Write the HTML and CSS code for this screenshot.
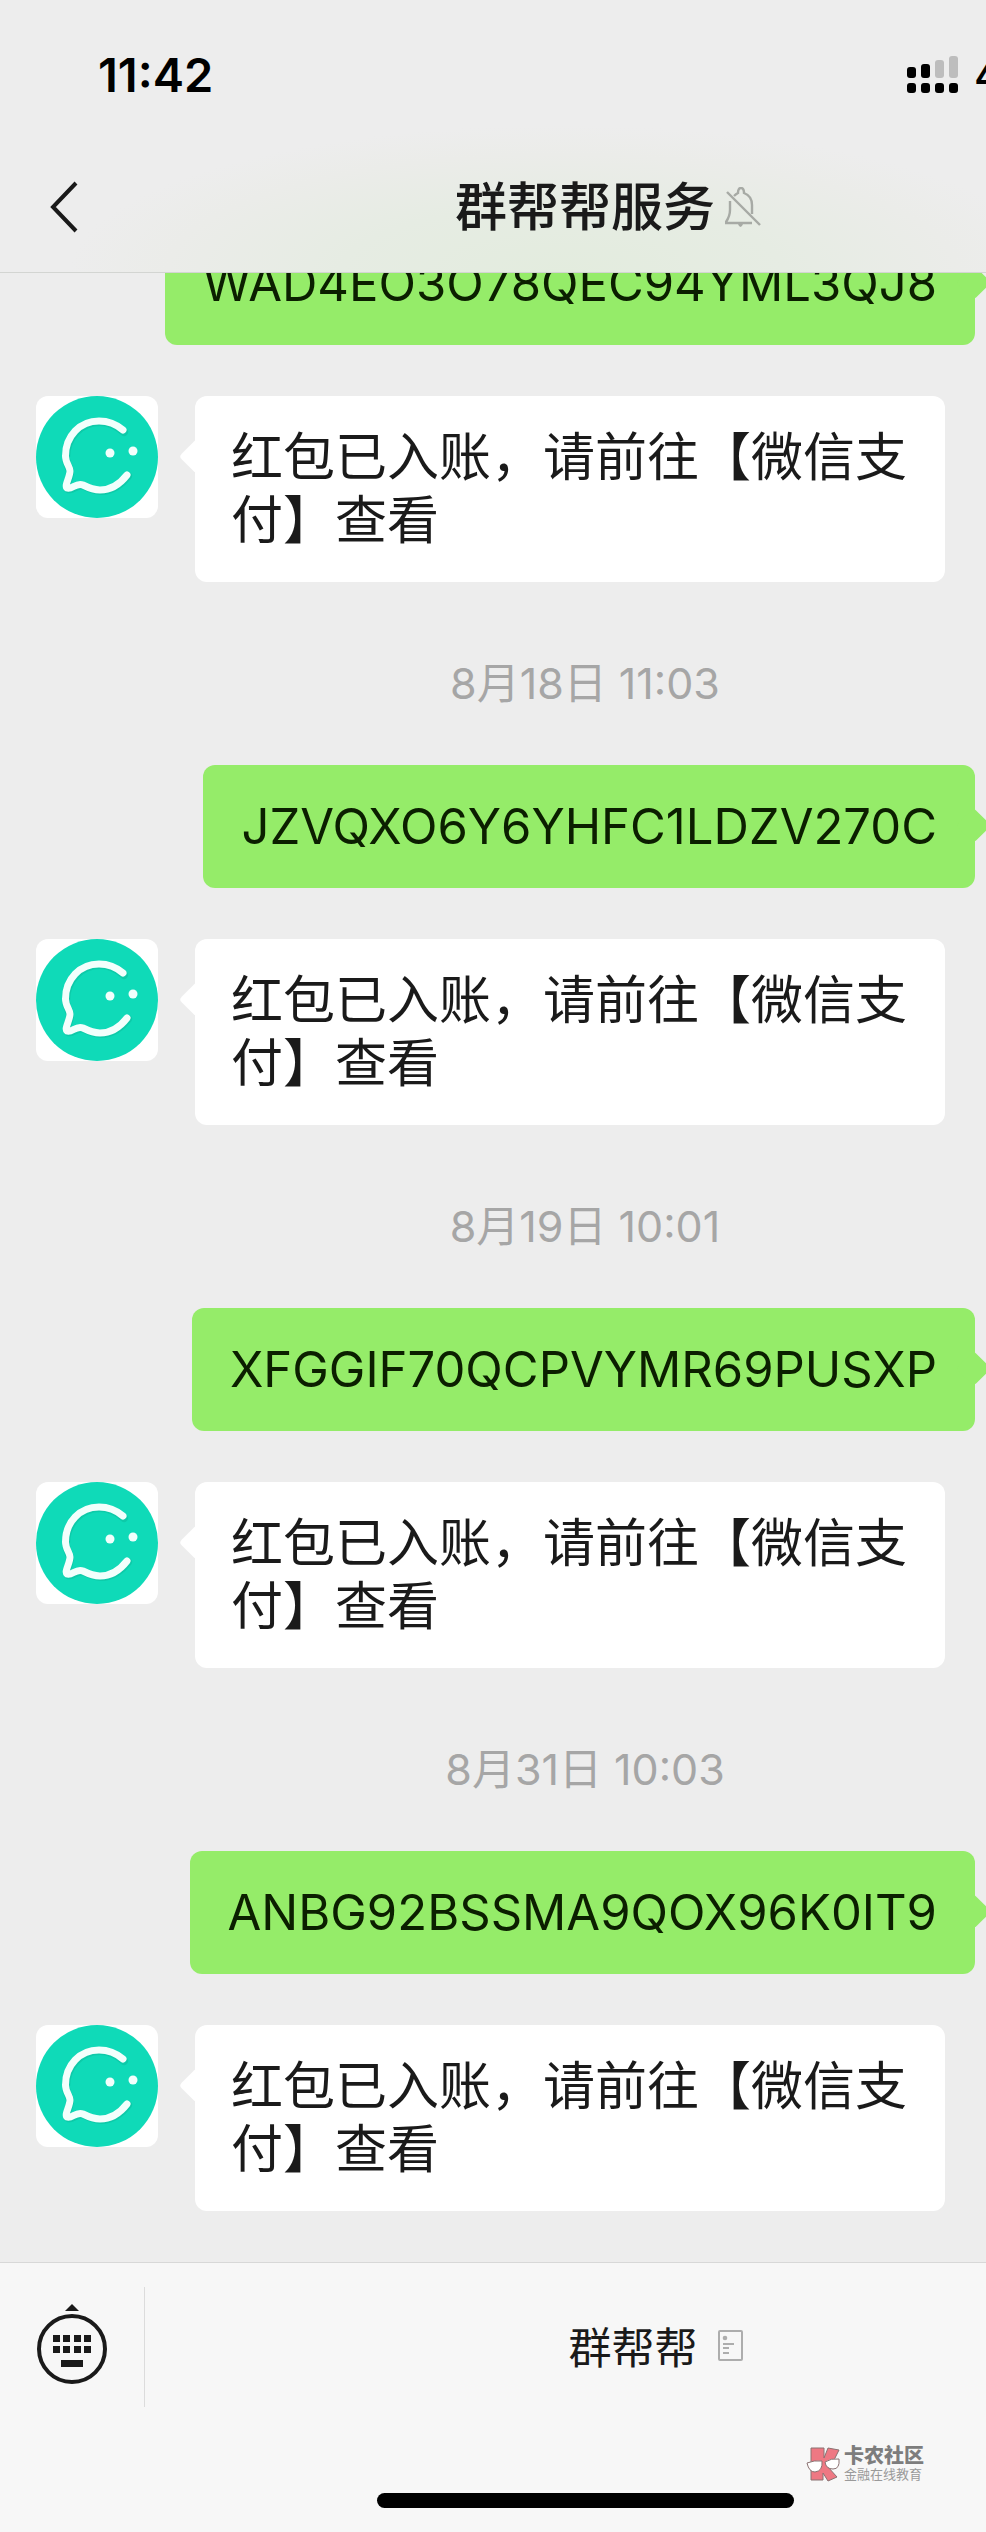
FILE: index.html
```html
<!DOCTYPE html>
<html lang="zh-CN">
<head>
<meta charset="utf-8">
<meta name="viewport" content="width=device-width, initial-scale=1">
<title>群帮帮服务</title>
<link rel="stylesheet" href="styles.css">
</head>
<body>
<svg class="sprite" aria-hidden="true">
  <symbol id="avatar" viewBox="0 0 122 122">
    <circle cx="61" cy="61" r="61" fill="#0fdab8"/>
    <g fill="none" stroke-linecap="round" stroke-linejoin="round" stroke-width="7">
      <path stroke="#0bbf9f" stroke-opacity=".6" stroke-width="8" d="M88 36C80 29 72 26 64 26C45 26 30 41 30 62C30 69 34 72 34 76C34 82 29 91 32 93C37 95 41 87 48 90C54 93 59 95 65 95C76 95 86 88 92 80"/>
      <path stroke="#f2fffc" d="M87 34C80 28 72 25 63 25C44 25 29.500 40 29.500 60C29.500 67 34 71 34 75C34 81 28 90 31 92C36 94 40 86 47 89C53 92 58 94 64 94C75 94 84 88 91 79"/>
    </g>
    <circle cx="74" cy="57" r="4.500" fill="#f2fffc"/>
    <circle cx="97" cy="55" r="4.500" fill="#f2fffc"/>
  </symbol>
</svg>
<div class="app">
  <header class="header">
    <div class="status">
      <time class="clock">11:42</time>
      <div class="network">
        <svg class="signal" viewBox="0 0 51 37" aria-hidden="true">
          <g fill="#bdbdbd"><rect x="28" y="4" width="9" height="18" rx="3"/><rect x="42" y="0" width="9" height="22" rx="3"/></g>
          <rect x="0" y="11" width="9" height="11" rx="3"/><rect x="14" y="8" width="9" height="14" rx="3"/>
          <rect x="0" y="27" width="9" height="10" rx="3"/><rect x="14" y="27" width="9" height="10" rx="3"/><rect x="28" y="27" width="9" height="10" rx="3"/><rect x="42" y="27" width="9" height="10" rx="3"/>
        </svg>
        <span class="carrier">4G</span>
      </div>
    </div>
    <div class="navbar">
      <button class="back" type="button" aria-label="返回">
        <svg viewBox="0 0 28 52" aria-hidden="true"><path d="M26 2L3 26L26 50" fill="none" stroke="#1a1a1a" stroke-width="4"/></svg>
      </button>
      <h1 class="title">群帮帮服务
        <svg class="muted" viewBox="0 0 36 40" aria-hidden="true"><g fill="none" stroke="#a7aaa5" stroke-width="2.400"><path d="M5 14V23Q5 29 1 35V36H27M9 9Q11 7 13 6Q13 1 16 1Q19 1 19 6Q27 9 27 18V27"/><path d="M2 5L35 38"/></g><path d="M13 37H18Q17 40 15.500 40Q14 40 13 37Z" fill="#a7aaa5"/></svg>
      </h1>
    </div>
  </header>

  <main class="chat">
    <div class="row sent"><p class="bubble">WAD4EO3O78QEC94YML3QJ8</p></div>
    <div class="row"><svg class="avatar" role="img" aria-label="群帮帮"><use href="#avatar"/></svg><p class="bubble">红包已入账，请前往【微信支付】查看</p></div>

    <time class="date">8月18日 11:03</time>
    <div class="row sent"><p class="bubble">JZVQXO6Y6YHFC1LDZV270C</p></div>
    <div class="row"><svg class="avatar" role="img" aria-label="群帮帮"><use href="#avatar"/></svg><p class="bubble">红包已入账，请前往【微信支付】查看</p></div>

    <time class="date">8月19日 10:01</time>
    <div class="row sent"><p class="bubble">XFGGIF70QCPVYMR69PUSXP</p></div>
    <div class="row"><svg class="avatar" role="img" aria-label="群帮帮"><use href="#avatar"/></svg><p class="bubble">红包已入账，请前往【微信支付】查看</p></div>

    <time class="date">8月31日 10:03</time>
    <div class="row sent"><p class="bubble">ANBG92BSSMA9QOX96K0IT9</p></div>
    <div class="row"><svg class="avatar" role="img" aria-label="群帮帮"><use href="#avatar"/></svg><p class="bubble">红包已入账，请前往【微信支付】查看</p></div>
  </main>

  <footer class="footer">
    <div class="toolbar">
      <button class="keyboard" type="button" aria-label="键盘">
        <svg viewBox="0 0 70 80" fill="#1a1a1a" aria-hidden="true">
          <path d="M28 7L35 0L42 7Z"/>
          <circle cx="35" cy="45" r="33" fill="none" stroke="#1a1a1a" stroke-width="4"/>
          <path d="M16 31h7v7h-7zM26 31h7v7h-7zM37 31h7v7h-7zM47 31h7v7h-7zM16 42h7v7h-7zM26 42h7v7h-7zM37 42h7v7h-7zM47 42h7v7h-7zM24 56h22v7h-22z"/>
        </svg>
      </button>
      <button class="menu" type="button">群帮帮
        <svg class="page" viewBox="0 0 25 31" aria-hidden="true"><g fill="none" stroke="#adadad" stroke-width="2"><rect x="1" y="1" width="23" height="29" rx="1"/><path d="M5 14H16M5 18H11M5 23H11"/></g><circle cx="7" cy="8" r="2.300" fill="#adadad"/></svg>
      </button>
    </div>
    <div class="home"></div>
    <div class="watermark">
      <svg viewBox="0 0 34 35" aria-hidden="true">
        <g stroke="#8a7272" stroke-width="1"><path fill="#ee7883" d="M5 1L18 1L18 11L22 1L33 3L26 17L22 20L31 30L22 34L17 26L17 33L5 33Z"/>
        <path fill="#fff" d="M1 16Q8 13 16 14Q17 24 9 25Q3 25 1 16ZM19 15Q25 11 33 12Q34 22 27 22Q20 22 19 15Z"/></g>
      </svg>
      <div><strong class="brand">卡农社区</strong><span class="tagline">金融在线教育</span></div>
    </div>
  </footer>
</div>
</body>
</html>
```
FILE: styles.css
```css
* {
  box-sizing: border-box;
}

:root {
  --shift: 184px;
  --ink: #1a1a1a;
  --green: #95ec69;
}

body {
  margin: 0;
  background: #ededed;
  color: var(--ink);
  font-family: Inter, "Noto Sans CJK SC", sans-serif;
}

button {
  padding: 0;
  border: 0;
  background: none;
  color: inherit;
  font: inherit;
}

svg {
  display: block;
}

.sprite {
  position: absolute;
  width: 0;
  height: 0;
}

.app {
  display: flex;
  flex-direction: column;
  height: 100vh;
  overflow: hidden;
}

.header {
  flex: none;
  border-bottom: 1px solid #d3d5d2;
  background: radial-gradient(ellipse 50% 54% at 57% 100%, #e3ecde 0%, #e6ece3 45%, #ebece9 80%, #ededed 100%);
}

.status {
  display: flex;
  justify-content: space-between;
  align-items: center;
  height: 142px;
  padding: 6px 0 0 98px;
  overflow: hidden;
  color: #000;
}

.clock {
  font-size: 47px;
  font-weight: 600;
}

.network {
  display: flex;
  align-items: center;
  gap: 16px;
  width: 79px;
}

.signal {
  flex: none;
  width: 51px;
  height: 37px;
}

.carrier {
  font-size: 42px;
  font-weight: 500;
}

.navbar {
  display: flex;
  align-items: center;
  height: 130px;
  padding-left: 50px;
}

.back svg {
  width: 28px;
  height: 52px;
}

.title {
  position: relative;
  flex: none;
  margin: 0 auto;
  padding: 2px 0 0 106px;
  font-size: 52px;
  font-weight: 500;
  line-height: 64px;
}

.muted {
  position: absolute;
  left: 100%;
  top: 13px;
  width: 36px;
  height: 40px;
  margin-left: 10px;
}

.chat {
  display: flex;
  flex: 1;
  flex-direction: column;
  justify-content: flex-end;
  gap: 51px;
  min-height: 0;
  padding-bottom: 51px;
  overflow: hidden;
}

.row {
  display: flex;
  flex: none;
  align-items: flex-start;
  gap: 37px;
  padding: 0 41px 0 36px;
}

.sent {
  justify-content: flex-end;
  padding-right: 11px;
}

.avatar {
  flex: none;
  width: 122px;
  height: 122px;
  border-radius: 12px;
  background: #fff;
}

.bubble {
  position: relative;
  margin: 0;
  padding: 30px 36px;
  border-radius: 12px;
  background: #fff;
  font-size: 52px;
  line-height: 63px;
}

.bubble::before {
  content: "";
  position: absolute;
  top: 48px;
  left: -11px;
  width: 25px;
  height: 25px;
  border-radius: 4px;
  background: inherit;
  transform: rotate(45deg);
}

.sent .bubble {
  padding: 30px 38px;
  background: var(--green);
  color: #0b1f00;
  font-size: 49px;
}

.sent .bubble::before {
  right: -11px;
  left: auto;
}

.date {
  flex: none;
  padding: 20px 0 0 var(--shift);
  color: #a6a6a6;
  font-size: 43px;
  line-height: 61px;
  text-align: center;
}

.footer {
  position: relative;
  flex: none;
  height: 270px;
  border-top: 1px solid #d8d8d8;
  background: #f7f7f7;
}

.toolbar {
  display: flex;
  align-items: stretch;
  padding-top: 24px;
}

.keyboard {
  display: flex;
  flex: none;
  justify-content: center;
  align-items: center;
  width: 145px;
  height: 120px;
  padding: 0 1px 6px 0;
  border-right: 1px solid #dcdcdc;
}

.keyboard svg {
  width: 70px;
  height: 80px;
}

.menu {
  display: flex;
  flex: 1;
  justify-content: center;
  align-items: center;
  gap: 20px;
  padding: 0 0 4px 180px;
  font-size: 43px;
}

.page {
  width: 25px;
  height: 31px;
}

.home {
  width: 417px;
  height: 15px;
  margin: 86px auto 0;
  border-radius: 8px;
  background: #000;
  translate: 92px 0;
}

.watermark {
  position: absolute;
  right: 62px;
  bottom: 50px;
  display: flex;
  align-items: center;
  gap: 4px;
}

.watermark svg {
  width: 34px;
  height: 35px;
}

.brand,
.tagline {
  display: block;
}

.brand {
  color: #7d7d7d;
  font-size: 20px;
  font-weight: 900;
  line-height: 20px;
}

.tagline {
  color: #9a9a9a;
  font-size: 13px;
  line-height: 16px;
}
```
